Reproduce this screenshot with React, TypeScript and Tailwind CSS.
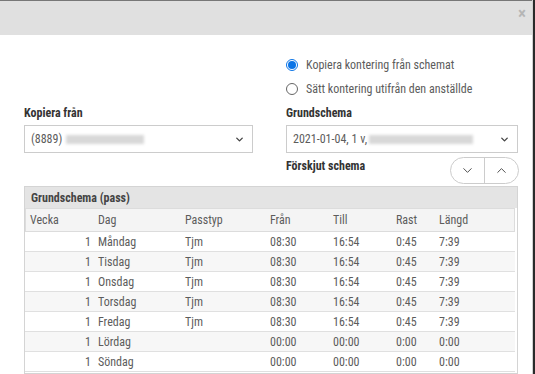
import { ChevronDown, ChevronUp } from 'lucide-react';

const rows = [
  { v: 1, dag: 'Måndag', typ: 'Tjm', fran: '08:30', till: '16:54', rast: '0:45', langd: '7:39' },
  { v: 1, dag: 'Tisdag', typ: 'Tjm', fran: '08:30', till: '16:54', rast: '0:45', langd: '7:39' },
  { v: 1, dag: 'Onsdag', typ: 'Tjm', fran: '08:30', till: '16:54', rast: '0:45', langd: '7:39' },
  { v: 1, dag: 'Torsdag', typ: 'Tjm', fran: '08:30', till: '16:54', rast: '0:45', langd: '7:39' },
  { v: 1, dag: 'Fredag', typ: 'Tjm', fran: '08:30', till: '16:54', rast: '0:45', langd: '7:39' },
  { v: 1, dag: 'Lördag', typ: '', fran: '00:00', till: '00:00', rast: '0:00', langd: '0:00' },
  { v: 1, dag: 'Söndag', typ: '', fran: '00:00', till: '00:00', rast: '0:00', langd: '0:00' },
];

function Blur({ w }: { w: string }) {
  return <span className={`inline-block h-[9px] ${w} bg-[#d8d8d8] blur-[1.5px] align-middle`} />;
}

export default function App() {
  return (
    <div className="flex h-[374px] w-[535px] overflow-hidden bg-[#2a2a2a] font-['Roboto_Condensed','Liberation_Sans_Narrow','DejaVu_Sans_Condensed',sans-serif] text-[12px] text-[#5c5c5c]">
      <div className="flex w-[533px] flex-col border-r border-[#d0d0d0] bg-white">
        {/* Header */}
        <div className="flex h-[35px] shrink-0 items-start justify-end border-t border-[#777] bg-[#e0e0e0] pr-[6px] pt-[4px]">
          <span className="text-[17px] font-bold leading-none text-[#b5b5b5]">×</span>
        </div>

        {/* Radios */}
        <div className="ml-[286px] mt-[21px] flex flex-col gap-[6px]">
          <label className="flex items-center gap-[8px]">
            <span className="flex h-[12px] w-[12px] items-center justify-center rounded-full border border-[#0b74e6] bg-white">
              <span className="h-[8px] w-[8px] rounded-full bg-[#0b74e6]" />
            </span>
            <span>Kopiera kontering från schemat</span>
          </label>
          <label className="flex items-center gap-[8px]">
            <span className="h-[12px] w-[12px] rounded-full border border-[#666] bg-white" />
            <span>Sätt kontering utifrån den anställde</span>
          </label>
        </div>

        {/* Selects */}
        <div className="mt-[6px] flex pl-[24px]">
          <div className="w-[229px]">
            <div className="font-bold text-[#333]">Kopiera från</div>
            <div className="mt-[3px] flex h-[28px] items-center justify-between border border-[#ccc] pl-[6px] pr-[7px]">
              <span className="flex items-center gap-[4px]">
                (8889) <Blur w="w-[78px]" />
              </span>
              <ChevronDown className="h-[11px] w-[11px] text-[#444]" strokeWidth={3} />
            </div>
          </div>
          <div className="ml-[33px] w-[232px]">
            <div className="font-bold text-[#333]">Grundschema</div>
            <div className="mt-[3px] flex h-[28px] items-center justify-between border border-[#ccc] pl-[6px] pr-[7px]">
              <span className="flex items-center gap-[2px]">
                2021-01-04, 1 v, <Blur w="w-[104px]" />
              </span>
              <ChevronDown className="h-[11px] w-[11px] text-[#444]" strokeWidth={3} />
            </div>
            <div className="mt-[4px] flex items-start justify-between">
              <span className="font-bold text-[#333]">Förskjut schema</span>
              <div className="mr-[-1px] flex h-[27px] w-[69px] rounded-full border border-[#ccc]">
                <div className="flex flex-1 items-center justify-center border-r border-[#ccc]">
                  <ChevronDown className="h-[15px] w-[15px] text-[#444]" strokeWidth={1.5} />
                </div>
                <div className="flex flex-1 items-center justify-center">
                  <ChevronUp className="h-[15px] w-[15px] text-[#444]" strokeWidth={1.5} />
                </div>
              </div>
            </div>
          </div>
        </div>

        {/* Table */}
        <div className="ml-[24px] mt-[2px] w-[494px] flex-1 border border-[#d4d4d4]">
          <div className="flex h-[21px] items-center bg-[#e4e4e4] pl-[6px] font-bold text-[#444]">Grundschema (pass)</div>
          <div className="mr-[2px] flex h-[24px] items-center border border-[#dcdcdc] bg-[#f4f4f4]">
            <span className="w-[72px] pl-[4px]">Vecka</span>
            <span className="w-[87px]">Dag</span>
            <span className="w-[85px]">Passtyp</span>
            <span className="w-[63px]">Från</span>
            <span className="w-[63px]">Till</span>
            <span className="w-[43px]">Rast</span>
            <span>Längd</span>
          </div>
          {rows.map((r, i) => (
            <div
              key={r.dag}
              className={`mr-[2px] flex h-[20px] items-center border-b border-[#e0e0e0] ${i % 2 ? 'bg-[#f7f7f7]' : 'bg-white'}`}
            >
              <span className="w-[66px] text-right">{r.v}</span>
              <span className="w-[94px] pl-[7px]">{r.dag}</span>
              <span className="w-[85px]">{r.typ}</span>
              <span className="w-[63px]">{r.fran}</span>
              <span className="w-[63px]">{r.till}</span>
              <span className="w-[43px]">{r.rast}</span>
              <span>{r.langd}</span>
            </div>
          ))}
        </div>
      </div>
    </div>
  );
}
